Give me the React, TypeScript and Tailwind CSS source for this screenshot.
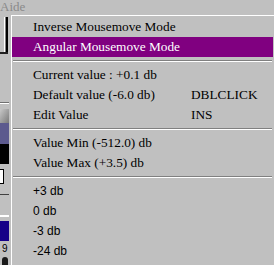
import React from 'react';

type Item =
  | { kind: 'item'; label: string; key?: string; active?: boolean; font: 'serif' | 'sans' }
  | { kind: 'sep' };

const items: Item[] = [
  { kind: 'item', label: 'Inverse Mousemove Mode', font: 'serif' },
  { kind: 'item', label: 'Angular Mousemove Mode', font: 'serif', active: true },
  { kind: 'sep' },
  { kind: 'item', label: 'Current value : +0.1 db', font: 'serif' },
  { kind: 'item', label: 'Default value (-6.0 db)', key: 'DBLCLICK', font: 'serif' },
  { kind: 'item', label: 'Edit Value', key: 'INS', font: 'serif' },
  { kind: 'sep' },
  { kind: 'item', label: 'Value Min (-512.0) db', font: 'serif' },
  { kind: 'item', label: 'Value Max (+3.5) db', font: 'serif' },
  { kind: 'sep' },
  { kind: 'item', label: '+3 db', font: 'sans' },
  { kind: 'item', label: '0 db', font: 'sans' },
  { kind: 'item', label: '-3 db', font: 'sans' },
  { kind: 'item', label: '-24 db', font: 'sans' },
];

// bits of the host window peeking out on the left of the popup
function Backdrop() {
  return (
    <div className="flex flex-col w-[10px]">
      <div className="h-[17px]" />
      <div className="h-[37px] w-[8px] flex justify-end border-b-2 border-[#202020]">
        <div className="w-px bg-white" />
        <div className="w-px bg-[#808080]" />
        <div className="w-[2px] bg-black" />
      </div>
      <div className="h-[48px]" />
      <div className="h-px w-[9px] bg-[#707070]" />
      <div className="h-px w-[9px] bg-white" />
      <div className="h-[5px]" />
      <div className="h-[14px] w-[9px] bg-gradient-to-br from-[#c8c8c8] to-[#7a7a7a]" />
      <div className="h-[21px] w-[9px] bg-[#5c5a8e]" />
      <div className="h-[20px] w-[9px] bg-black" />
      <div className="h-[5px]" />
      <div className="h-[15px] w-[4px] bg-white border border-l-0 border-black" />
      <div className="h-[10px]" />
      <div className="h-px w-[9px] bg-[#404040]" />
      <div className="h-[20px]" />
      <div className="h-[2px] w-[9px] bg-white" />
      <div className="h-[4px]" />
      <div className="h-[20px] w-[9px] bg-[#160088]" />
      <div className="h-[16px] pl-[2px] text-[10px] leading-[16px] font-['Liberation_Sans',sans-serif] text-black">9</div>
      <div className="h-[9px] w-[6px] ml-[2px] bg-[#1a1a1a] rounded-t-sm" />
    </div>
  );
}

export default function App() {
  return (
    <div className="relative w-[274px] h-[265px] overflow-hidden bg-[#c0c0c0]">
      <div className="absolute left-0 top-0 h-[14px] text-[13px] leading-[13px] text-[#8a8a8a] font-['Liberation_Serif',serif]">
        Aide
      </div>
      <Backdrop />

      {/* popup menu */}
      <div className="absolute left-[10px] top-[14px] w-[270px] h-[270px] pl-px pt-px bg-[#c0c0c0]">
        <div className="h-full border-l border-t border-white pt-px pr-px">
          {items.map((it, i) =>
            it.kind === 'sep' ? (
              <div key={i} className="py-[3px] pl-px w-[260px]">
                <div className="h-px bg-[#808080]" />
                <div className="h-px bg-white" />
              </div>
            ) : (
              <div
                key={i}
                className={`flex items-center h-[20px] w-[261px] pl-[21px] whitespace-nowrap ${
                  it.active ? 'bg-[#800080] text-white' : 'text-black'
                } ${
                  it.font === 'serif'
                    ? "font-['Liberation_Serif',serif] text-[13.3px]"
                    : "font-['Liberation_Sans',sans-serif] text-[12px]"
                }`}
              >
                <span className="w-[158px]">{it.label}</span>
                {it.key && <span>{it.key}</span>}
              </div>
            )
          )}
        </div>
      </div>
    </div>
  );
}
